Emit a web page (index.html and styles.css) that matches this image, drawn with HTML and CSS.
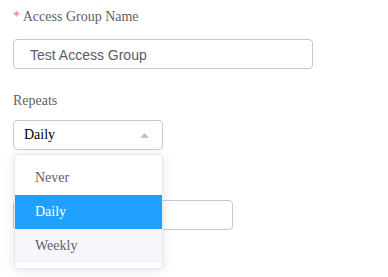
FILE: index.html
```html
<!DOCTYPE html>
<html>
<head>
<meta charset="utf-8">
<link rel="stylesheet" href="styles.css">
</head>
<body>
<form class="form">
  <div class="item">
    <label class="label"><span class="req">*</span> Access Group Name</label>
    <div class="input name-input">Test Access Group</div>
  </div>
  <div class="item repeats">
    <label class="label">Repeats</label>
    <div class="select-wrap">
      <div class="select">
        <span class="select-value">Daily</span>
        <svg class="caret" width="9" height="5" viewBox="0 0 9 5"><path d="M4.5 0 L9 5 L0 5 Z" fill="#c0c4cc"/></svg>
      </div>
      <ul class="dropdown">
        <li class="opt">Never</li>
        <li class="opt selected">Daily</li>
        <li class="opt hover">Weekly</li>
      </ul>
    </div>
  </div>
  <div class="item third">
    <div class="input short-input"></div>
  </div>
</form>
</body>
</html>
```
FILE: styles.css
```css
html, body {
  margin: 0;
  padding: 0;
  background: #fff;
}
body {
  min-height: 277px;
}
.form {
  padding: 7px 0 50px 13px;
  font-family: "Liberation Serif", "Times New Roman", serif;
  font-size: 14px;
}
.item {
  display: flex;
  flex-direction: column;
  align-items: flex-start;
}
.label {
  display: block;
  line-height: 20px;
  height: 20px;
  color: #606266;
}
.req {
  color: #f56c6c;
}
.input {
  box-sizing: border-box;
  border: 1px solid #bfcbd9;
  border-radius: 4px;
  height: 30px;
  background: #fff;
}
.name-input {
  margin-top: 12px;
  width: 300px;
  padding-left: 16px;
  font-family: "Liberation Sans", Arial, sans-serif;
  font-size: 14px;
  line-height: 30px;
  color: #5a5e66;
}
.repeats {
  margin-top: 22px;
}
.select-wrap {
  position: relative;
  margin-top: 9px;
}
.select {
  box-sizing: border-box;
  width: 150px;
  height: 30px;
  border: 1px solid #bfcbd9;
  border-radius: 4px;
  display: flex;
  align-items: center;
  justify-content: space-between;
  padding: 0 13px 0 10px;
  color: #000;
}
.select-value {
  line-height: 20px;
}
.caret {
  display: block;
  margin-top: 0;
}
.dropdown {
  position: absolute;
  top: 34px;
  left: 1px;
  width: 149px;
  box-sizing: border-box;
  margin: 0;
  padding: 6px 0 5px;
  list-style: none;
  background: #fff;
  border: 1px solid #e4e7ed;
  border-radius: 4px;
  box-shadow: 0 2px 12px rgba(0, 0, 0, 0.1);
  z-index: 10;
}
.opt {
  height: 34px;
  line-height: 34px;
  padding-left: 20px;
  color: #606266;
}
.opt.selected {
  background: #20a0ff;
  color: #fff;
}
.opt.hover {
  background: #f5f7fa;
}
.third {
  margin-top: 50px;
}
.short-input {
  width: 220px;
}
```
